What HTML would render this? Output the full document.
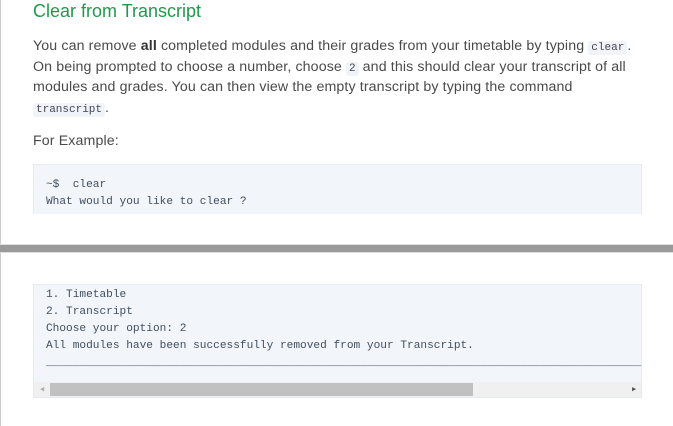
<!DOCTYPE html>
<html><head><style>
body{margin:0;width:673px;height:426px;overflow:hidden;background:#fff;font-family:"Liberation Sans",sans-serif;position:relative}
.lb{position:absolute;left:0;top:0;width:1px;height:426px;background:#ccc}
h2{position:absolute;left:33px;top:0;margin:0;font-weight:normal;font-size:18px;color:#1f9a4a;line-height:22px}
p{position:absolute;left:33px;margin:0;font-size:14.2px;color:#4a4a4a;line-height:20.5px;width:640px;letter-spacing:0.12px;white-space:nowrap}
code{font-family:"Liberation Mono",monospace;font-size:11px;line-height:1;background:#f0f4f8;color:#445;padding:1px 3px;border-radius:3px;letter-spacing:0}
.pre{position:absolute;left:33px;width:609px;background:#f2f5f9;border:1px solid #e5eaf0;font-family:"Liberation Mono",monospace;font-size:11.15px;color:#3f4f5f;line-height:17px;box-sizing:border-box;padding-left:12px;overflow:hidden;white-space:pre}
.sep{position:absolute;left:0;top:244px;width:673px;height:9px;background:#9a9a9a;border-top:1px solid #ddd;border-bottom:1px solid #ddd;box-sizing:border-box}
</style></head><body>
<div class="lb"></div>
<h2>Clear from Transcript</h2>
<p style="top:36px">You can remove <b style="color:#333">all</b> completed modules and their grades from your timetable by typing <code>clear</code>.<br>On being prompted to choose a number, choose <code>2</code> and this should clear your transcript of all<br>modules and grades. You can then view the empty transcript by typing the command<br><code>transcript</code>.</p>
<p style="top:131px">For Example:</p>
<div class="pre" style="top:164px;height:50px;padding-top:12px;border-bottom:none">~$  clear
What would you like to clear ?</div>
<div class="sep"></div>
<div class="pre" style="top:284px;height:114px;padding-top:2px">1. Timetable
2. Transcript
Choose your option: 2
All modules have been successfully removed from your Transcript.
______________________________________________________________________________________________
<div style="position:absolute;left:0;top:97px;width:609px;height:15px;background:#f0f0f0"></div><div style="position:absolute;left:16px;top:98px;width:423px;height:13px;background:#c1c1c1"></div><div style="position:absolute;left:6px;top:101px;font-size:7px;color:#aaa;line-height:8px">◀</div><div style="position:absolute;left:598px;top:101px;font-size:7px;color:#555;line-height:8px">▶</div></div>
</body></html>
